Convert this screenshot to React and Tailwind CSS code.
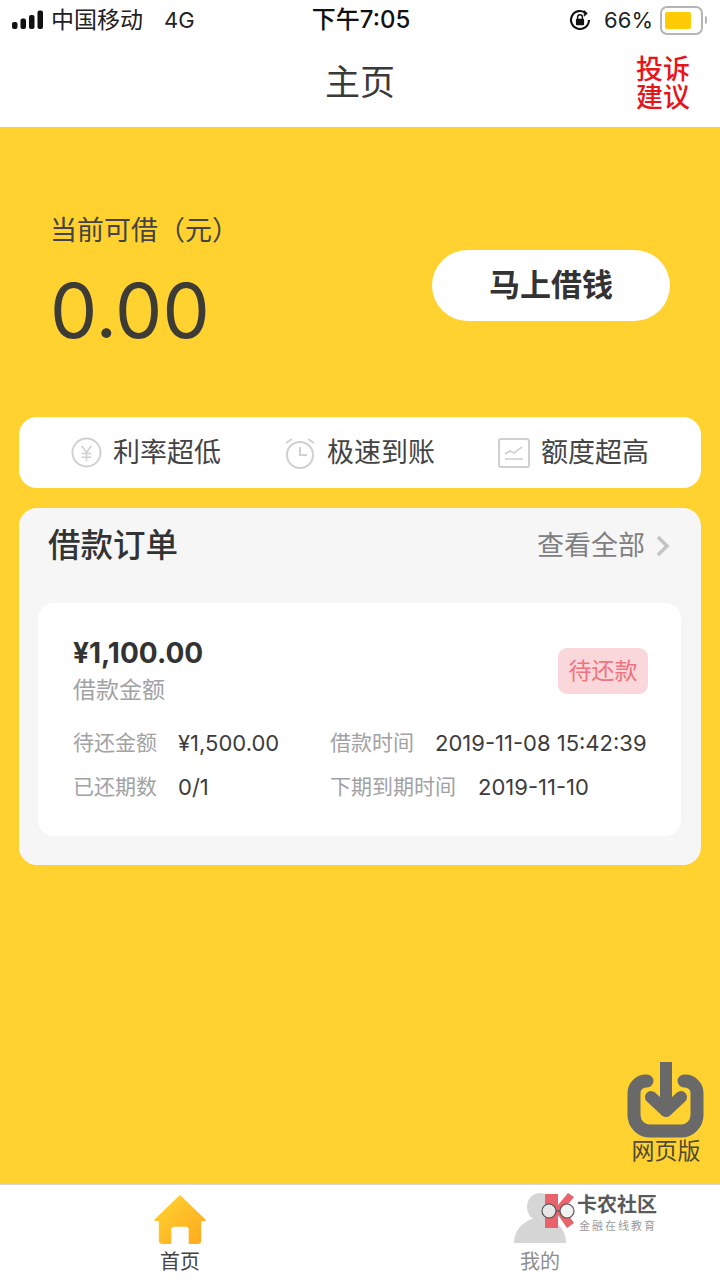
const font = { fontFamily: '"Inter","Noto Sans CJK SC",sans-serif' };

function Row({ label, value, gap }) {
  return (
    <div className={`flex items-center ${gap}`}>
      <span className="text-[21px] leading-[30px] text-[#a2a2a4]">{label}</span>
      <span className="text-[22px] leading-[30px] text-[#3c3c3c]">{value}</span>
    </div>
  );
}

function Feature({ icon, text }) {
  return (
    <div className="flex items-center gap-[11px]">
      {icon}
      <span className="text-[27px] leading-[34px] text-[#444]">{text}</span>
    </div>
  );
}

export default function App() {
  return (
    <div className="relative flex h-[1280px] w-[720px] flex-col overflow-hidden bg-white" style={font}>
      {/* status bar */}
      <div className="flex h-[40px] shrink-0 items-center justify-between pl-[12px] pr-[13px] text-[#222]">
        <div className="flex w-[240px] items-center">
          <svg width="32" height="20" viewBox="0 0 32 20" fill="#111">
            <rect x="0" y="12" width="5.5" height="7" rx="2" />
            <rect x="8.5" y="8.5" width="5.5" height="10.5" rx="2" />
            <rect x="17" y="5" width="5.5" height="14" rx="2" />
            <rect x="25.5" y="0.5" width="5.5" height="18.5" rx="2" />
          </svg>
          <span className="ml-[7px] text-[23px] leading-[30px]">中国移动</span>
          <span className="ml-[21px] text-[22px] leading-[30px]">4G</span>
        </div>
        <span className="ml-[3px] text-[24px] font-medium leading-[30px] text-[#111]">下午7:05</span>
        <div className="flex w-[240px] items-center justify-end">
          <svg width="24" height="24" viewBox="0 0 20 20" fill="none" stroke="#111" strokeWidth="1.7">
            <path d="M17.5 10a7.5 7.5 0 1 1-2.5-5.6" />
            <path d="M13.5 2.2l2.6 2.4-2.6 2.2z" fill="#111" strokeWidth="0.6" />
            <rect x="6.6" y="9" width="6.8" height="5.4" rx="0.8" fill="#111" stroke="none" />
            <path d="M8 9.4V7.6a2 2 0 0 1 4 0v1.8" strokeWidth="1.2" />
          </svg>
          <span className="ml-[12px] text-[22px] leading-[30px]">66%</span>
          <div className="ml-[7px] flex h-[29px] w-[43px] items-center rounded-[7px] border-2 border-[#b5b5b5] py-[4px] pl-[3px] pr-[10px]">
            <div className="h-full w-full rounded-[2px] bg-[#ffcb05]" />
          </div>
          <div className="ml-[2px] h-[8px] w-[2px] rounded-r bg-[#b5b5b5]" />
        </div>
      </div>

      {/* header */}
      <div className="relative flex h-[87px] shrink-0 items-center justify-center pb-[3px]">
        <span className="text-[35px] leading-[44px] text-[#3a3a3a]">主页</span>
        <div className="absolute right-[30px] top-[16px] w-[54px] text-center text-[27px] font-medium leading-[28px] text-[#e8141c]">
          投诉<br />建议
        </div>
      </div>

      {/* main */}
      <div className="flex flex-1 flex-col bg-[#ffd22f] pl-[19px] pr-[19px]">
        <div className="flex h-[290px] items-start justify-between pl-[31px] pr-[31px] pt-[86px]">
          <div>
            <div className="text-[27px] leading-[36px] text-[#444]">当前可借（元）</div>
            <div className="mt-[18px] text-[75px] font-normal leading-[88px] text-[#3d3b35]">0.00</div>
          </div>
          <div className="mt-[37px] flex h-[71px] w-[238px] items-center justify-center rounded-full bg-white text-[31px] font-bold text-[#333]">
            马上借钱
          </div>
        </div>

        <div className="flex h-[71px] items-center justify-between rounded-[18px] bg-white pl-[52px] pr-[52px]">
          <Feature
            text="利率超低"
            icon={
              <svg width="31" height="31" viewBox="0 0 32 32" fill="none" stroke="#d0d0d0" strokeWidth="2">
                <circle cx="16" cy="16" r="14.5" />
                <path d="M11 9l5 7 5-7M11 17h10M11 21h10M16 16v9" strokeWidth="1.5" />
              </svg>
            }
          />
          <Feature
            text="极速到账"
            icon={
              <svg width="32" height="32" viewBox="0 0 32 32" fill="none" stroke="#d0d0d0" strokeWidth="2">
                <circle cx="16" cy="18" r="13" />
                <path d="M16 10v8h7M2 6l6-4M30 6l-6-4" />
              </svg>
            }
          />
          <Feature
            text="额度超高"
            icon={
              <svg width="32" height="30" viewBox="0 0 32 30" fill="none" stroke="#d0d0d0" strokeWidth="2">
                <rect x="1" y="1" width="30" height="28" rx="2" />
                <path d="M7 16l5-3 4 2 8-6M7 21h18" strokeWidth="1.6" />
              </svg>
            }
          />
        </div>

        <div className="mt-[20px] rounded-[18px] bg-[#f6f6f6] pb-[29px] pl-[19px] pr-[20px]">
          <div className="flex h-[95px] items-center justify-between pb-[20px] pl-[10px] pr-[11px]">
            <span className="text-[32.5px] font-medium leading-[44px] text-[#333]">借款订单</span>
            <div className="flex items-center gap-[11px]">
              <span className="text-[27px] leading-[36px] text-[#808080]">查看全部</span>
              <svg width="14" height="22" viewBox="0 0 14 22" fill="none" stroke="#c4c4c4" strokeWidth="3.5">
                <path d="M2 2l9 9-9 9" />
              </svg>
            </div>
          </div>

          <div className="h-[233px] rounded-[16px] bg-white pl-[35px] pr-[33px] pt-[32px]">
            <div className="flex items-start justify-between">
              <div>
                <div className="text-[28px] font-bold leading-[36px] text-[#333]">¥1,100.00</div>
                <div className="mt-[3px] text-[23px] leading-[32px] text-[#a2a2a4]">借款金额</div>
              </div>
              <div className="mt-[13px] flex h-[46px] w-[90px] items-center justify-center rounded-[9px] bg-[#fad7da] text-[23px] text-[#ef7480]">
                待还款
              </div>
            </div>
            <div className="mt-[22px] flex justify-between">
              <div className="flex flex-col gap-[14px]">
                <Row label="待还金额" value="¥1,500.00" gap="gap-[21px]" />
                <Row label="已还期数" value="0/1" gap="gap-[21px]" />
              </div>
              <div className="flex w-[318px] flex-col gap-[14px]">
                <Row label="借款时间" value="2019-11-08 15:42:39" gap="gap-[21px]" />
                <Row label="下期到期时间" value="2019-11-10" gap="gap-[22px]" />
              </div>
            </div>
          </div>
        </div>
      </div>

      {/* tabs */}
      <div className="flex h-[96px] shrink-0 justify-between border-t border-[#d8d8d8] bg-white px-[141px] pt-[8px]">
        <div className="flex w-[78px] flex-col items-center">
          <svg width="52" height="52" viewBox="0 0 54 52">
            <defs>
              <linearGradient id="h" x1="0" y1="0" x2="1" y2="1">
                <stop offset="0" stopColor="#ffd52f" />
                <stop offset="1" stopColor="#ffa81f" />
              </linearGradient>
            </defs>
            <path
              fill="url(#h)"
              d="M27 1L53 26a1 1 0 0 1-1 2h-3v20a4 4 0 0 1-4 4H36V37a3 3 0 0 0-3-3H21a3 3 0 0 0-3 3v15H9a4 4 0 0 1-4-4V28H2a1 1 0 0 1-1-2z"
            />
          </svg>
          <span className="mt-[4px] text-[20px] leading-[26px] text-[#444]">首页</span>
        </div>
        <div className="flex w-[78px] flex-col items-center">
          <svg width="54" height="52" viewBox="0 0 54 52" fill="#d6d6d6">
            <ellipse cx="27" cy="14" rx="13" ry="14" />
            <path d="M1 50c0-13 9-21 18-24h16c10 3 18 11 18 24z" />
          </svg>
          <span className="mt-[4px] text-[20px] leading-[26px] text-[#8e8e8e]">我的</span>
        </div>
      </div>

      {/* floating download */}
      <div className="absolute left-[626px] top-[1061px] flex w-[80px] flex-col items-center">
        <svg width="80" height="78" viewBox="0 0 80 78" fill="none" stroke="#696969">
          <path d="M21 20h-1a12 12 0 0 0-12 12v22a16 16 0 0 0 16 16h31a16 16 0 0 0 16-16V32a12 12 0 0 0-12-12h-1" strokeWidth="13" strokeLinecap="round" />
          <path d="M40 1v46" strokeWidth="12" />
          <path d="M25 36l15 14 15-14" strokeWidth="12" strokeLinejoin="round" strokeLinecap="round" />
        </svg>
        <span className="mt-[-1px] text-[23px] leading-[26px] text-[#4f4a35]">网页版</span>
      </div>

      {/* watermark */}
      <div className="absolute left-[540px] top-[1193px] flex items-start">
        <svg width="36" height="36" viewBox="0 0 36 36">
          <path fill="#e8636b" d="M5 1h13v11L28 0l6 4-10 12 10 14-7 5-9-13v13H5z" />
          <circle cx="9" cy="18" r="7" fill="#e6e6e6" stroke="#555" strokeWidth="1.2" />
          <circle cx="27" cy="18" r="7" fill="#f2f2f2" stroke="#555" strokeWidth="1.2" />
          <path d="M16 18h4" stroke="#555" strokeWidth="1.2" />
        </svg>
        <div className="ml-[1px] flex flex-col items-start">
          <span className="text-[20px] font-bold leading-[24px] text-[#5a5a5a]">卡农社区</span>
          <span className="ml-[2px] mt-[2px] text-[11px] leading-[14px] tracking-[2px] text-[#9a9a9a]">金融在线教育</span>
        </div>
      </div>
    </div>
  );
}
